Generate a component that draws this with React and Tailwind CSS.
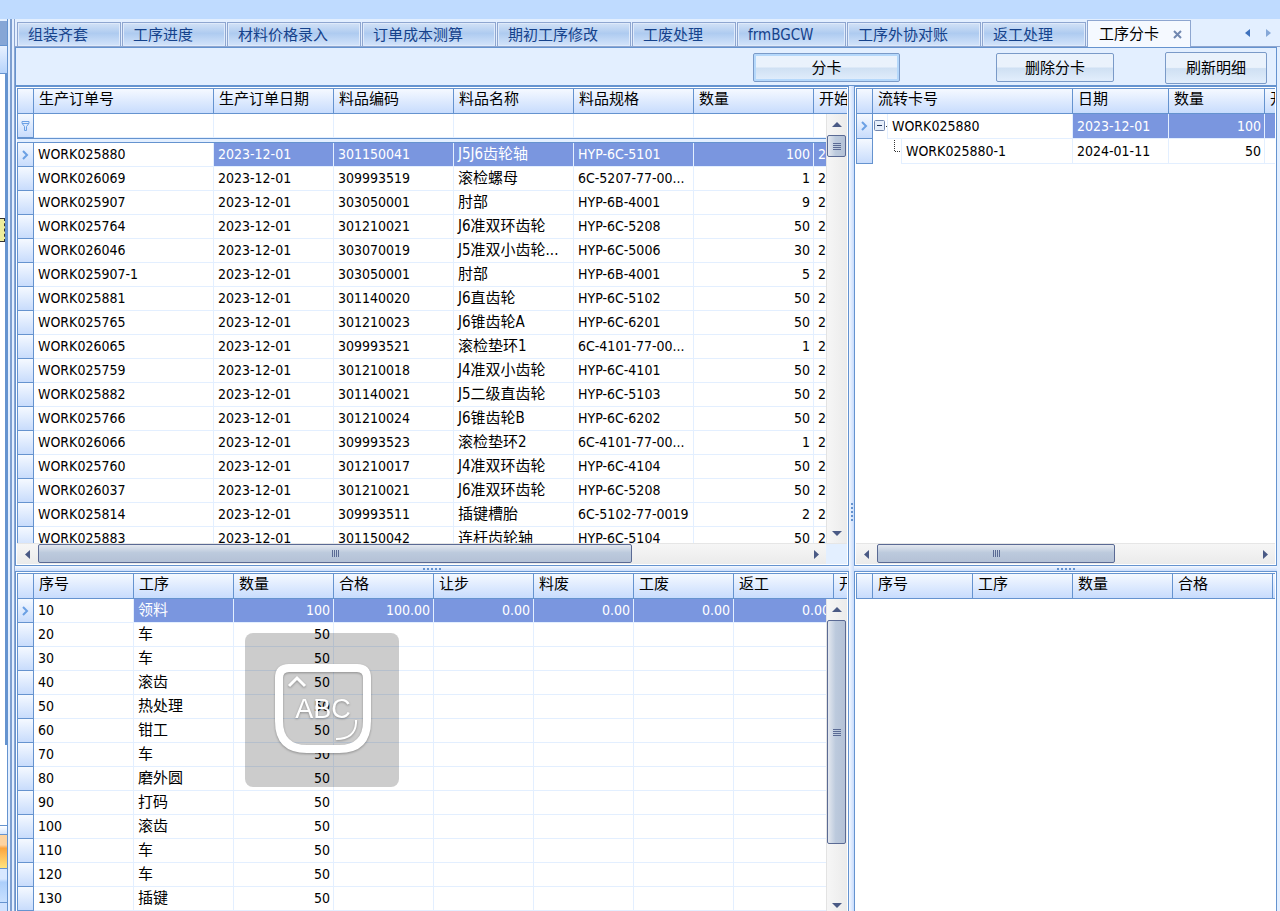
import React, { useState } from 'react';
import clsx from 'clsx';

const tabs = [
  { name: '组装齐套', width: 'w-[104px]' },
  { name: '工序进度', width: 'w-[104px]' },
  { name: '材料价格录入', width: 'w-[134px]' },
  { name: '订单成本测算', width: 'w-[134px]' },
  { name: '期初工序修改', width: 'w-[134px]' },
  { name: '工废处理', width: 'w-[104px]' },
  { name: 'frmBGCW', width: 'w-[109px]' },
  { name: '工序外协对账', width: 'w-[134px]' },
  { name: '返工处理', width: 'w-[104px]' },
  { name: '工序分卡', width: 'w-[104px]' },
];

const orderColumns = [
  { name: '生产订单号', width: 180 },
  { name: '生产订单日期', width: 120 },
  { name: '料品编码', width: 120 },
  { name: '料品名称', width: 120 },
  { name: '料品规格', width: 120 },
  { name: '数量', width: 120, right: true },
  { name: '开始', width: 120 },
];

const orders = [
  ['WORK025880', '2023-12-01', '301150041', 'J5J6齿轮轴', 'HYP-6C-5101', '100', '2'],
  ['WORK026069', '2023-12-01', '309993519', '滚检螺母', '6C-5207-77-00...', '1', '2'],
  ['WORK025907', '2023-12-01', '303050001', '肘部', 'HYP-6B-4001', '9', '2'],
  ['WORK025764', '2023-12-01', '301210021', 'J6准双环齿轮', 'HYP-6C-5208', '50', '2'],
  ['WORK026046', '2023-12-01', '303070019', 'J5准双小齿轮...', 'HYP-6C-5006', '30', '2'],
  ['WORK025907-1', '2023-12-01', '303050001', '肘部', 'HYP-6B-4001', '5', '2'],
  ['WORK025881', '2023-12-01', '301140020', 'J6直齿轮', 'HYP-6C-5102', '50', '2'],
  ['WORK025765', '2023-12-01', '301210023', 'J6锥齿轮A', 'HYP-6C-6201', '50', '2'],
  ['WORK026065', '2023-12-01', '309993521', '滚检垫环1', '6C-4101-77-00...', '1', '2'],
  ['WORK025759', '2023-12-01', '301210018', 'J4准双小齿轮', 'HYP-6C-4101', '50', '2'],
  ['WORK025882', '2023-12-01', '301140021', 'J5二级直齿轮', 'HYP-6C-5103', '50', '2'],
  ['WORK025766', '2023-12-01', '301210024', 'J6锥齿轮B', 'HYP-6C-6202', '50', '2'],
  ['WORK026066', '2023-12-01', '309993523', '滚检垫环2', '6C-4101-77-00...', '1', '2'],
  ['WORK025760', '2023-12-01', '301210017', 'J4准双环齿轮', 'HYP-6C-4104', '50', '2'],
  ['WORK026037', '2023-12-01', '301210021', 'J6准双环齿轮', 'HYP-6C-5208', '50', '2'],
  ['WORK025814', '2023-12-01', '309993511', '插键槽胎', '6C-5102-77-0019', '2', '2'],
  ['WORK025883', '2023-12-01', '301150042', '连杆齿轮轴', 'HYP-6C-5104', '50', '2'],
];

const processColumns = [
  { name: '序号', width: 100 },
  { name: '工序', width: 100 },
  { name: '数量', width: 100, right: true },
  { name: '合格', width: 100, right: true },
  { name: '让步', width: 100, right: true },
  { name: '料废', width: 100, right: true },
  { name: '工废', width: 100, right: true },
  { name: '返工', width: 100, right: true },
  { name: '开', width: 100 },
];

const processes = [
  ['10', '领料', '100', '100.00', '0.00', '0.00', '0.00', '0.00', ''],
  ...[
    ['20', '车'],
    ['30', '车'],
    ['40', '滚齿'],
    ['50', '热处理'],
    ['60', '钳工'],
    ['70', '车'],
    ['80', '磨外圆'],
    ['90', '打码'],
    ['100', '滚齿'],
    ['110', '车'],
    ['120', '车'],
    ['130', '插键'],
  ].map(([no, name]) => [no, name, '50', '', '', '', '', '', '']),
];

const cardColumns = [
  { name: '流转卡号', width: 200 },
  { name: '日期', width: 96 },
  { name: '数量', width: 96 },
  { name: '开', width: 96 },
];

const cards = [
  ['WORK025880', '2023-12-01', '100', ''],
  ['WORK025880-1', '2024-01-11', '50', ''],
];

const cardProcessColumns = [
  { name: '序号', width: 100 },
  { name: '工序', width: 100 },
  { name: '数量', width: 100 },
  { name: '合格', width: 100 },
  { name: '', width: 100 },
];

const hasHan = (text) => /[\u4e00-\u9fff]/.test(text);

function Arrow({ dir }) {
  const points = {
    up: '0,5 5,0 10,5',
    down: '0,0 10,0 5,5',
    left: '5,0 5,9 0,4.5',
    right: '0,0 0,9 5,4.5',
  };
  const vertical = dir === 'up' || dir === 'down';
  return (
    <svg width={vertical ? 10 : 5} height={vertical ? 5 : 9} aria-hidden="true">
      <polygon points={points[dir]} fill="#4a5a85" />
    </svg>
  );
}

function VScroll({ thumb, end }) {
  return (
    <div className="col-start-2 row-start-2 z-10 flex flex-col min-h-0 border-l border-[#e3e3e3] bg-linear-to-r from-[#f6f6f6] to-[#ebebeb]">
      <button aria-label="向上滚动" className="h-[21px] shrink-0 flex items-center justify-center">
        <Arrow dir="up" />
      </button>
      <div className="flex-1 min-h-0">
        <div className={clsx('w-[19px] flex flex-col items-center justify-center gap-px rounded-[2px] border border-[#5a6a94] bg-linear-to-r from-[#e4e8ef] via-[#bccadd] via-45% to-[#b4c1d6]', thumb)}>
          {[0, 1, 2, 3].map((i) => (
            <div key={i} className="w-2 h-px bg-[#5a6a94]" />
          ))}
        </div>
      </div>
      <button aria-label="向下滚动" className={clsx('shrink-0 flex items-center justify-center', end)}>
        <Arrow dir="down" />
      </button>
    </div>
  );
}

function HScroll({ thumb, corner }) {
  return (
    <div className="flex h-[21px] shrink-0 border-t border-[#e6e6e6] bg-linear-to-b from-[#f6f6f6] to-[#ebebeb]">
      <button aria-label="向左滚动" className="w-[21px] shrink-0 flex items-center justify-center">
        <Arrow dir="left" />
      </button>
      <div className="flex-1 min-w-0">
        <div className={clsx('h-[19px] flex items-center justify-center gap-px rounded-[2px] border border-[#5a6a94] bg-linear-to-b from-[#e4e8ef] via-[#bccadd] via-45% to-[#b4c1d6]', thumb)}>
          {[0, 1, 2, 3].map((i) => (
            <div key={i} className="h-[7px] w-px bg-[#5a6a94]" />
          ))}
        </div>
      </div>
      <button aria-label="向右滚动" className="w-5 shrink-0 flex items-center justify-center">
        <Arrow dir="right" />
      </button>
      {corner && <div className="w-[21px] shrink-0 bg-[#e3efff]" />}
    </div>
  );
}

function Indicator({ active, filter }) {
  return (
    <td className="border-x border-b border-[#6593cf] bg-linear-to-b from-[#f5f9ff] to-[#c8dcfc] p-0">
      {active && (
        <svg className="block mx-auto" width="7" height="10" viewBox="0 0 7 10" fill="none" stroke="#6ba0e4" strokeWidth="2" aria-hidden="true">
          <path d="M1 1l4 4-4 4" />
        </svg>
      )}
      {filter && (
        <svg className="block mx-auto" width="9" height="10" viewBox="0 0 9 10" fill="none" stroke="#6ba0e4" aria-hidden="true">
          <path d="M1 .5h7v2H1zM1.5 3l2 2.500v4h2v-4l2-2.500" />
        </svg>
      )}
    </td>
  );
}

function Head({ columns }) {
  return (
    <>
      <colgroup>
        <col style={{ width: 17 }} />
        {columns.map((col, i) => (
          <col key={i} style={{ width: col.width }} />
        ))}
      </colgroup>
      <thead>
        <tr className="h-[26px] bg-linear-to-b from-[#f7faff] to-[#c6dbfd]">
          <th className="border border-[#6593cf] p-0" aria-label="行" />
          {columns.map((col, i) => (
            <th key={i} className="border-y border-r border-[#6593cf] pl-[5px] pb-1 pt-0 pr-0 text-left text-[15px] leading-5 font-normal whitespace-nowrap">
              {col.name}
            </th>
          ))}
        </tr>
      </thead>
    </>
  );
}

function Grid({ columns, children, scroll, label }) {
  const width = columns.reduce((sum, col) => sum + col.width, 17);
  return (
    <div className="flex-1 min-h-0 overflow-hidden grid grid-cols-[minmax(0,1fr)_21px] grid-rows-[26px_minmax(0,1fr)]">
      <div className="col-start-1 col-span-2 row-start-1 row-span-2 overflow-hidden">
        <table aria-label={label} className="table-fixed border-separate border-spacing-0" style={{ width }}>
          <Head columns={columns} />
          <tbody>{children}</tbody>
        </table>
      </div>
      {scroll}
    </div>
  );
}

function DataRow({ columns, cells, active, onSelect }) {
  return (
    <tr className="h-6" onClick={onSelect}>
      <Indicator active={active} />
      {cells.map((cell, i) => (
        <td
          key={i}
          className={clsx(
            'border-r border-b border-[#e3efff] pt-0 pb-px pl-1 pr-[3px] leading-5 whitespace-nowrap overflow-hidden',
            hasHan(cell) ? 'text-[15px]' : 'text-sm leading-5',
            columns[i].right && 'text-right',
            active && i > 0 && 'bg-[#7a96df] text-white'
          )}
        >
          {cell}
        </td>
      ))}
    </tr>
  );
}

function Panel({ className, children }) {
  return (
    <section className={clsx('min-h-0 flex flex-col border-x border-t border-[#6593cf] bg-white p-px overflow-hidden', className)}>
      {children}
    </section>
  );
}

function Splitter() {
  return (
    <div className="h-[5px] shrink-0 flex items-center justify-center gap-[2px] bg-linear-to-b from-[#f5f9ff] to-[#c8dcfc]">
      {[0, 1, 2, 3, 4].map((i) => (
        <div key={i} className="size-[2px] bg-[#6593cf]" />
      ))}
    </div>
  );
}

function CardRow({ cells, active, child }) {
  return (
    <tr className="h-[25px] text-sm leading-5">
      <Indicator active={active} />
      <td className="border-r border-[#e3efff] p-0">
        <div className="flex h-[25px]">
          {child ? (
            <svg className="shrink-0" width="28" height="25" fill="none" stroke="#333" strokeDasharray="1 1" aria-hidden="true">
              <path d="M21.500 1v12M22 12.500h6" />
            </svg>
          ) : (
            <svg className="shrink-0" width="14" height="25" fill="none" aria-hidden="true">
              <rect x="1.500" y="6.500" width="10" height="10" rx="1" fill="#e6eefa" stroke="#7287ae" />
              <path d="M4 11.500h5" stroke="#22345c" />
              <path d="M13 12.500h1" stroke="#333" />
            </svg>
          )}
          <div className="flex-1 border-l border-b border-[#e3efff] pl-1 flex items-center">{cells[0]}</div>
        </div>
      </td>
      {cells.slice(1).map((cell, i) => (
        <td
          key={i}
          className={clsx(
            'border-r border-b border-[#e3efff] py-0 pl-1 pr-[3px]',
            i === 1 && 'text-right',
            active && 'bg-[#7a96df] text-white'
          )}
        >
          {cell}
        </td>
      ))}
    </tr>
  );
}

// Edge of the docked navigation panel
function SideStrip() {
  return (
    <aside className="w-[15px] shrink-0 flex border-r border-[#8ea6d0]">
      <div className="w-2 flex flex-col border-r border-[#6593cf]">
        <div className="mt-[2px] h-6 bg-[#86a6d6] shrink-0" />
        <div className="h-[29px] shrink-0 border-y border-[#6593cf] bg-linear-to-b from-[#e8f1ff] to-[#b7d4fb]" />
        <div className="h-[671px] shrink-0 bg-white border-r-2 border-[#6593cf] flex flex-col">
          <div className="mt-[144px] h-6 bg-[#eeee9c] border-y border-r border-dashed border-[#333]" />
        </div>
        <div className="flex-1 bg-white" />
        <div className="h-[9px] shrink-0 border-t border-[#6593cf] bg-linear-to-b from-white to-[#d5e5fd]" />
        <div className="h-[34px] shrink-0 border-t border-[#6593cf] bg-linear-to-b from-[#fdd3a0] from-30% via-[#fba53c] via-40% to-[#ffe47f]" />
        <div className="h-[34px] shrink-0 border-t border-[#6593cf] bg-linear-to-b from-[#d8e8ff] from-30% via-[#accffb] via-40% to-[#c8e0ff]" />
        <div className="h-[9px] shrink-0 border-t border-[#6593cf] bg-[#cfe2ff]" />
      </div>
      <div className="ml-[2px] w-[2px] bg-[#7e9fd0]" />
    </aside>
  );
}

function TabBar() {
  const [current, setCurrent] = useState('工序分卡');
  return (
    <nav className="h-[28px] shrink-0 flex items-end gap-px pl-[2px] border-b border-[#8ea6d0] text-[15px] leading-5">
      {tabs.map((tab) =>
        tab.name === current ? (
          <div key={tab.name} className={clsx('relative z-10 -mb-px h-[27px] shrink-0 flex items-center justify-between border border-b-0 border-[#8ea6d0] bg-[#f5f9ff] pl-[11px] pr-2', tab.width)}>
            <span>{tab.name}</span>
            <button aria-label="关闭">
              <svg width="9" height="9" viewBox="0 0 9 9" stroke="#7187b0" strokeWidth="2" aria-hidden="true">
                <path d="M1 1l7 7M8 1L1 8" />
              </svg>
            </button>
          </div>
        ) : (
          <button
            key={tab.name}
            onClick={() => setCurrent(tab.name)}
            className={clsx(
              'h-6 shrink-0 border border-b-0 border-[#8ea6d0] pl-[10px] text-left whitespace-nowrap text-[#15428b] shadow-[inset_0_0_0_1px_#dfeafa] bg-linear-to-b from-[#d3e2f6] from-0% via-[#aecbf0] via-45% to-[#d4e4fa] to-100%',
              tab.width
            )}
          >
            {tab.name}
          </button>
        )
      )}
      <div className="ml-auto mr-[9px] h-[27px] flex items-center gap-4">
        <button aria-label="上一个">
          <svg className="block" width="5" height="8" aria-hidden="true">
            <polygon points="5,0 5,8 0,4" fill="#3f72bd" />
          </svg>
        </button>
        <button aria-label="下一个">
          <svg className="block" width="5" height="8" aria-hidden="true">
            <polygon points="0,0 0,8 5,4" fill="#86a8d8" />
          </svg>
        </button>
      </div>
    </nav>
  );
}

function ToolButton({ className, children }) {
  return (
    <button className={clsx('rounded-[2px] border border-[#7a9ac8] bg-linear-to-b from-[#eaf2fc] from-48% via-[#cfe0f3] via-52% to-[#e2eefc] text-[15px] leading-5', className)}>
      {children}
    </button>
  );
}

function ImeBadge() {
  return (
    <div className="absolute left-[245px] top-[633px] z-20 size-[154px] rounded-lg bg-black/20 pointer-events-none">
      <svg width="154" height="154" fill="none" stroke="#fff">
        <g className="drop-shadow-[0_1px_1px_rgba(0,0,0,0.3)]">
          <path d="M44 35H112Q122 35 122 45V88Q122 116 94 116H62Q34 116 34 88V45Q34 35 44 35Z" strokeWidth="8" />
          <path d="M44 53l8-8 8 8" strokeWidth="3" />
          <path d="M111 87v3Q110 106 91 106" strokeWidth="2" />
          <text x="78" y="85" textAnchor="middle" fill="#fff" stroke="none" className="text-[27px] font-['Liberation_Sans',sans-serif]">
            ABC
          </text>
        </g>
      </svg>
    </div>
  );
}

export default function App() {
  const [order, setOrder] = useState(0);
  const [process, setProcess] = useState(0);

  return (
    <div className="relative h-screen flex flex-col overflow-hidden bg-[#e3efff] text-black font-['DejaVu_Sans_Condensed','Noto_Sans','Noto_Sans_CJK_SC',sans-serif]">
      <header className="h-[19px] shrink-0 bg-[#bfdbff]" />
      <div className="flex-1 min-h-0 flex">
        <SideStrip />
        <main className="flex-1 min-w-0 flex flex-col">
          <TabBar />
          <div className="flex-1 min-h-0 flex flex-col mr-[3px]">
            <div className="h-[39px] shrink-0 flex items-center justify-end border border-[#6593cf] pr-[9px] pt-[2px]">
              <ToolButton className="w-[147px] h-[29px] mr-24 shadow-[inset_0_0_0_2px_#b5d8fb]">分卡</ToolButton>
              <ToolButton className="w-[118px] h-[29px] mr-[51px]">删除分卡</ToolButton>
              <ToolButton className="w-[102px] h-8">刷新明细</ToolButton>
            </div>

            <div className="flex-1 min-h-0 flex">
              <div className="flex-[834_1_0] min-w-0 flex flex-col">
                <Panel className="flex-[480_1_0] border-b">
                  <Grid columns={orderColumns} label="生产订单" scroll={<VScroll thumb="h-[22px]" end="h-5" />}>
                    <tr className="h-6">
                      <Indicator filter />
                      {orderColumns.map((col) => (
                        <td key={col.name} className="border-r border-b border-[#e3efff] p-0" />
                      ))}
                    </tr>
                    <tr className="h-[5px]">
                      <td colSpan={8} className="border-y border-[#6593cf] bg-[#e3efff] p-0" />
                    </tr>
                    {orders.map((cells, i) => (
                      <DataRow key={cells[0]} columns={orderColumns} cells={cells} active={i === order} onSelect={() => setOrder(i)} />
                    ))}
                  </Grid>
                  <HScroll thumb="w-[77.4%]" corner />
                </Panel>
                <Splitter />
                <Panel className="flex-[340_1_0] pb-0">
                  <Grid columns={processColumns} label="工序" scroll={<VScroll thumb="h-[80%]" end="h-[11px]" />}>
                    {processes.map((cells, i) => (
                      <DataRow key={cells[0]} columns={processColumns} cells={cells} active={i === process} onSelect={() => setProcess(i)} />
                    ))}
                  </Grid>
                </Panel>
              </div>

              <div className="w-[5px] shrink-0 flex flex-col items-center justify-center gap-[2px] pt-[26px] bg-linear-to-r from-[#f5f9ff] to-[#c8dcfc]">
                {[0, 1, 2, 3, 4].map((i) => (
                  <div key={i} className="size-[2px] bg-[#6593cf]" />
                ))}
              </div>

              <div className="flex-[423_1_0] min-w-0 flex flex-col">
                <Panel className="flex-[480_1_0] border-b">
                  <Grid columns={cardColumns} label="流转卡">
                    <CardRow cells={cards[0]} active />
                    <CardRow cells={cards[1]} child />
                  </Grid>
                  <HScroll thumb="w-[63%]" />
                </Panel>
                <Splitter />
                <Panel className="flex-[340_1_0] pb-0">
                  <Grid columns={cardProcessColumns} label="流转卡工序" />
                </Panel>
              </div>
            </div>
          </div>
        </main>
      </div>
      <ImeBadge />
    </div>
  );
}
